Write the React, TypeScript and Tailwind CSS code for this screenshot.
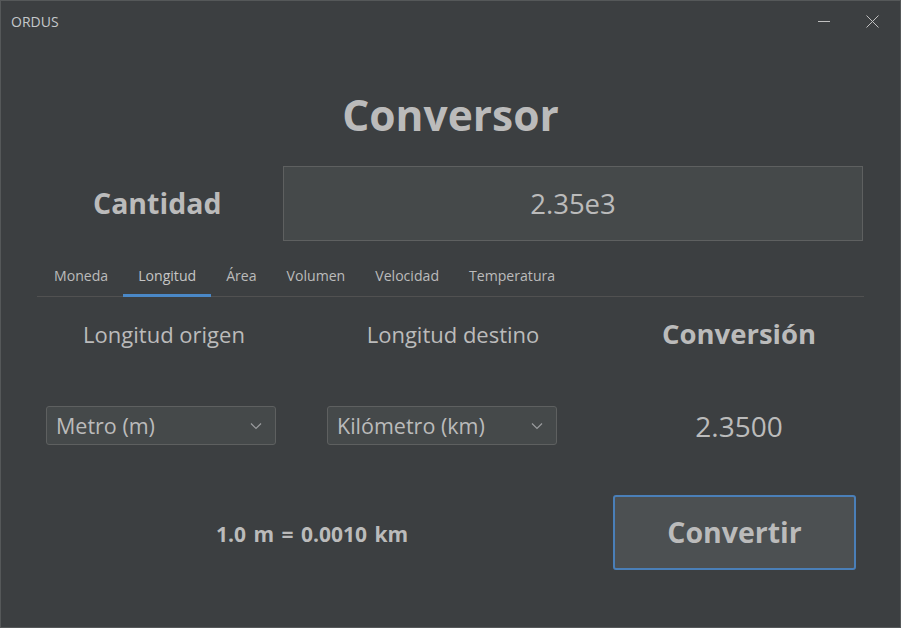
import { useState } from "react";

const TABS = ["Moneda", "Longitud", "Área", "Volumen", "Velocidad", "Temperatura"];
const FONT = "font-['Open_Sans','Noto_Sans',sans-serif]";

function Chevron() {
  return (
    <svg width="12" height="8" viewBox="0 0 12 8" className="shrink-0">
      <path d="M1 1.5 L6 6.5 L11 1.5" fill="none" stroke="#9a9c9e" strokeWidth="1.2" />
    </svg>
  );
}

function Select({ value }: { value: string }) {
  return (
    <div className="w-[230px] h-[39px] flex items-center justify-between pl-[9px] pr-[13px] bg-[#45494a] border border-[#5e6060] rounded-[3px]">
      <span className="text-[21.5px] leading-none text-[#bbbbbb]">{value}</span>
      <Chevron />
    </div>
  );
}

export default function App() {
  const [tab, setTab] = useState("Longitud");

  return (
    <div className={`w-[901px] h-[628px] bg-[#3c3f41] border border-[#555859] flex flex-col text-[#bbbbbb] ${FONT}`}>
      {/* title bar */}
      <div className="h-[40px] shrink-0 flex items-center pl-[10px]">
        <span className="text-[14px] text-[#c5c8cb]">ORDUS</span>
        <div className="ml-auto flex items-center gap-[36px] pr-[21px]">
          <svg width="12" height="12" viewBox="0 0 12 12">
            <path d="M0 6.5 H12" stroke="#c0c0c0" strokeWidth="1" />
          </svg>
          <svg width="13" height="13" viewBox="0 0 13 13">
            <path d="M0.5 0.5 L12.5 12.5 M12.5 0.5 L0.5 12.5" stroke="#c0c0c0" strokeWidth="1" />
          </svg>
        </div>
      </div>

      <h1 className="h-[58px] mt-[45px] flex items-center justify-center font-bold text-[42.5px] leading-none">
        Conversor
      </h1>

      {/* cantidad */}
      <div className="flex items-center mt-[22px] pl-[92px] pr-[37px]">
        <span className="w-[190px] font-bold text-[28.5px] leading-none">Cantidad</span>
        <div className="flex-1 h-[75px] flex items-center justify-center bg-[#45494a] border border-[#5e6060]">
          <span className="text-[27.5px] leading-none text-[#bbbbbb]">2.35e3</span>
        </div>
      </div>

      {/* tabs */}
      <div className="mx-[36px] mt-[22px] flex border-b border-[#515151] pl-[2px]">
        {TABS.map((t) => (
          <button
            key={t}
            onClick={() => setTab(t)}
            className={`h-[34px] px-[15px] pb-[5px] flex items-center text-[14.1px] leading-none border-b-[3px] -mb-[1px] ${
              tab === t ? "border-[#4a88c7] text-[#c5c5c5]" : "border-transparent text-[#bbbbbb]"
            }`}
          >
            {t}
          </button>
        ))}
      </div>

      {/* labels row */}
      <div className="flex items-center mt-[21px] h-[32px]">
        <div className="w-[326px] text-center text-[22px] leading-none">Longitud origen</div>
        <div className="w-[252px] text-center text-[22px] leading-none">Longitud destino</div>
        <div className="w-[320px] text-center font-bold text-[27.5px] leading-none">Conversión</div>
      </div>

      {/* selects row */}
      <div className="flex items-center mt-[56px] pl-[45px]">
        <Select value="Metro (m)" />
        <div className="w-[51px]" />
        <Select value="Kilómetro (km)" />
        <div className="ml-auto w-[322px] text-center text-[28px] leading-none">2.3500</div>
      </div>

      {/* bottom row */}
      <div className="flex items-center mt-[50px]">
        <div className="w-[612px] text-center font-bold text-[21px] leading-none pl-[10px] pt-[3px] [word-spacing:2px]">
          1.0 m = 0.0010 km
        </div>
        <button className="w-[243px] h-[75px] bg-[#4c5052] border-2 border-[#4a7fb8] rounded-[3px] font-bold text-[28.5px] leading-none text-[#bbbbbb]">
          Convertir
        </button>
      </div>
    </div>
  );
}
